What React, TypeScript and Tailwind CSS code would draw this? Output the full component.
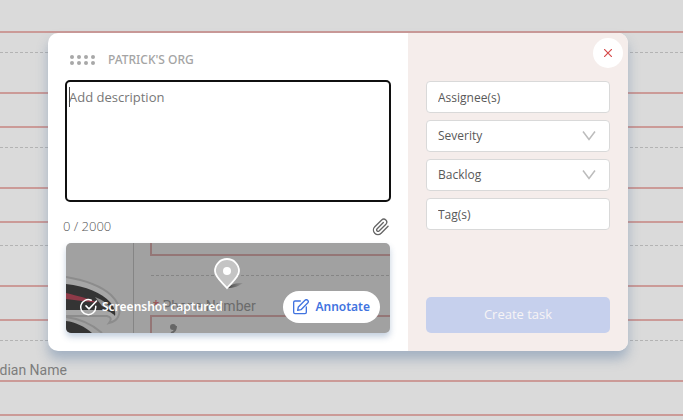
import React, { useState } from 'react';

const formRows = [
  { label: '', gap: 'mt-[19px]' },
  { label: '', gap: 'mt-[19px]' },
  { label: '', gap: 'mt-[22px]' },
  { label: 'Guardian Name', gap: 'mt-[19px]' },
];

const FormBackdrop: React.FC = () => (
  <div className="h-screen overflow-hidden bg-[#dadada]" aria-hidden="true">
    <div className="h-[33px] border-b-2 border-[#cb9a97]" />
    {formRows.map((row, index) => (
      <div key={index} className={row.gap}>
        <svg className="block h-px w-full">
          <line x1="0" y1="0.5" x2="100%" y2="0.5" stroke="#b3b3b3" strokeDasharray="3 2" />
        </svg>
        <div className="-ml-[30px] flex h-[39px] items-center pt-[18px] font-['Roboto'] text-sm text-[#7d7d7d]">
          {row.label}
        </div>
        <div className="h-9 border-y-2 border-[#cb9a97]" />
      </div>
    ))}
    <div className="mt-5 border-t border-dashed border-[#b3b3b3]" />
  </div>
);

const Chevron: React.FC = () => (
  <svg className="pointer-events-none absolute top-2.5 right-[13px] h-3 w-4" viewBox="0 0 16 12" fill="none" stroke="#bcbcbc" strokeWidth="1.5">
    <path d="M2 1.5 8 9.5 14 1.5" />
  </svg>
);

const fieldClass =
  'block h-8 w-full appearance-none rounded border border-[#d9d9d9] bg-white px-[11px] text-xs text-[#595959] placeholder-[#595959]';

const App: React.FC = () => {
  const [description, setDescription] = useState('');

  return (
    <div className="relative font-['Open_Sans',sans-serif]">
      <FormBackdrop />

      <div className="absolute inset-0 pt-[33px] pr-4 pl-12">
        <div className="flex max-w-[580px] overflow-hidden rounded-[10px] bg-white shadow-[0_8px_12px_rgba(60,100,150,0.35)]">
          {/* Description and capture */}
          <div className="min-w-0 flex-1 px-[18px] pb-[18px]">
            <div className="flex h-12 items-center gap-3 pt-1.5 pl-1">
              <svg className="h-[10px] w-[26px]" viewBox="0 0 26 10" fill="#a8a8a8">
                {[2, 9, 16, 23].map((x) => (
                  <g key={x}>
                    <circle cx={x} cy="2" r="2" />
                    <circle cx={x} cy="8" r="2" />
                  </g>
                ))}
              </svg>
              <h1 className="font-['Noto_Sans'] text-xs font-medium text-[#a4a4a4]">PATRICK'S ORG</h1>
            </div>

            <div className="relative">
              <textarea
                aria-label="Description"
                placeholder="Add description"
                maxLength={2000}
                value={description}
                onChange={(e) => setDescription(e.target.value)}
                className="peer block h-[120px] w-full resize-none rounded px-[3px] py-1.5 text-[13px] leading-5 text-[#444] outline-2 -outline-offset-1 outline-[#101010] placeholder:text-[#777]"
              />
              <span className="absolute top-1.5 left-[3px] h-5 w-px bg-[#444] peer-focus:hidden" />
            </div>

            <div className="-ml-[3px] flex h-[42px] items-center justify-between pt-2.5">
              <span className="text-[13px] font-light text-[#555]">{description.length} / 2000</span>
              <button type="button" aria-label="Attach file">
                <svg className="size-[18px]" viewBox="0 0 24 24" fill="none" stroke="#666" strokeWidth="1.800" strokeLinecap="round" strokeLinejoin="round">
                  <path d="m21.4 11.1-9.2 9.1a6 6 0 0 1-8.5-8.5l9.2-9.1a4 4 0 0 1 5.7 5.6l-9.2 9.2a2 2 0 0 1-2.8-2.8l8.5-8.5" />
                </svg>
              </button>
            </div>

            <div className="relative h-[90px] overflow-hidden rounded-[5px] bg-[#a1a1a1] shadow-[0_4px_6px_rgba(60,100,150,0.3)]">
              <svg className="absolute inset-0" width="324" height="90" viewBox="0 0 324 90" fill="none">
                {/* team logo */}
                <path d="M0 34C18 37 35 43 45 52C53 60 55 68 52 74C50 78 47 79 43 80C46 76 45 74 41 73H0" fill="#a6a6a6" stroke="#8c8c8c" strokeWidth="2" />
                <path d="M0 41C20 43 36 50 44 59C48 64 50 69 49 73C46 69 40 67 34 67H0Z" fill="#343434" />
                <path d="M0 50C12 53 22 55 32 60L0 56Z" fill="#8e3a48" />
                <path d="M29 54C37 57 43 62 46 67L36 63Z" fill="#8c8c8c" />
                <path d="M0 74C16 76 27 82 36 90" stroke="#8c8c8c" strokeWidth="2" />
                <path d="M0 78C10 79 19 84 26 90H0Z" fill="#343434" />
                <path d="M67.500 0V90" stroke="#858585" />
                <path d="M85 0V12H324M85 90V73H324" stroke="#947676" strokeWidth="2" />
                <path d="M85 32.500H324" stroke="#858585" strokeDasharray="3 2" />
                <circle cx="107" cy="84" r="3" fill="#666" />
                <path d="M110 83C110 87 108 89 105 90" stroke="#666" strokeWidth="2" />
              </svg>
              <span className="absolute top-[53px] left-[87px] font-['Roboto'] text-sm whitespace-nowrap text-[#6b6b6b]">
                <span className="text-[#9b5050]">*</span> Phone Number
              </span>
              <svg className="absolute top-[14px] left-[147px]" width="40" height="34" viewBox="0 0 40 34">
                <defs>
                  <linearGradient id="pin-shadow">
                    <stop offset="0" stopColor="#444" />
                    <stop offset="1" stopColor="#444" stopOpacity="0.1" />
                  </linearGradient>
                </defs>
                <path d="M14 31C18 27 23 26 30 26C26 29 21 31 14 31Z" fill="url(#pin-shadow)" />
                <path d="M14 31C9 25 2 20 2 14A12 12 0 0 1 26 14C26 20 19 25 14 31Z" fill="#c4c4c4" stroke="white" strokeWidth="1.800" />
                <circle cx="14" cy="14" r="4" fill="white" />
              </svg>
              <div className="absolute inset-x-0 bottom-2.5 flex h-8 items-center justify-between pr-2.5 pl-3.5">
                <span className="flex items-center gap-1 font-['Noto_Sans'] text-xs font-semibold text-white">
                  <svg className="size-[18px]" viewBox="0 0 24 24" fill="none" stroke="white" strokeWidth="2" strokeLinecap="round" strokeLinejoin="round">
                    <path d="M21 11v1a10 10 0 1 1-6-9M8 10.500l4 4L22 4" />
                  </svg>
                  Screenshot captured
                </span>
                <button type="button" className="flex h-8 items-center gap-1.5 rounded-full bg-white px-2.5 font-['Noto_Sans'] text-xs font-semibold text-[#4173e0]">
                  <svg className="size-4" viewBox="0 0 24 24" fill="none" stroke="currentColor" strokeWidth="2" strokeLinecap="round" strokeLinejoin="round">
                    <path d="M11 3H3a2 2 0 0 0-2 2v15a2 2 0 0 0 2 2h15a2 2 0 0 0 2-2v-8M18 2a2.800 2.800 0 0 1 4 4l-10 10-5 1 1-5Z" />
                  </svg>
                  Annotate
                </button>
              </div>
            </div>
          </div>

          {/* Task settings */}
          <div className="relative flex w-[220px] flex-col justify-between bg-[#f5edeb] px-[18px] pt-12 pb-[18px]">
            <button
              type="button"
              aria-label="Close"
              className="absolute top-[5px] right-[5px] flex size-[30px] items-center justify-center rounded-full bg-white"
            >
              <svg className="size-2" viewBox="0 0 8 8" stroke="#d64c4c" strokeWidth="1.200">
                <path d="M0 0 8 8M8 0 0 8" />
              </svg>
            </button>
            <div className="flex flex-col gap-[7px]">
              <input aria-label="Assignees" placeholder="Assignee(s)" className={fieldClass} />
              <div className="relative">
                <select aria-label="Severity" className={fieldClass}>
                  <option>Severity</option>
                </select>
                <Chevron />
              </div>
              <div className="relative">
                <select aria-label="Column" className={fieldClass}>
                  <option>Backlog</option>
                </select>
                <Chevron />
              </div>
              <input aria-label="Tags" placeholder="Tag(s)" className={fieldClass} />
            </div>
            <button type="button" className="h-9 rounded-[5px] bg-[#c6d0ed] text-[13px] font-medium text-[#f7f4f5]">
              Create task
            </button>
          </div>
        </div>
      </div>
    </div>
  );
};

export default App;
